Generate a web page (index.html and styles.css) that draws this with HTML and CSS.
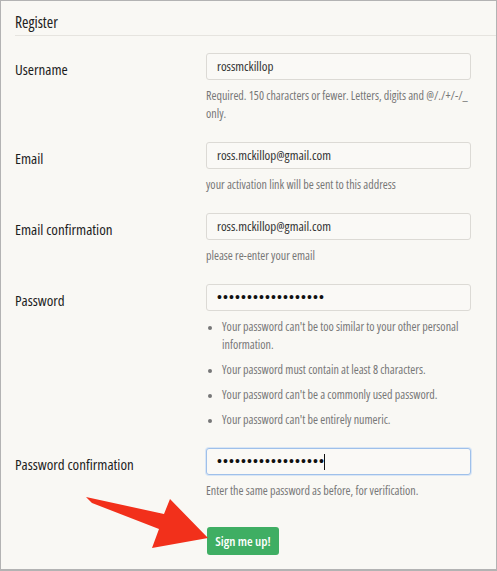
FILE: index.html
```html
<!DOCTYPE html>
<html>
<head>
<meta charset="utf-8">
<link rel="stylesheet" href="styles.css">
</head>
<body>
<div class="panel">
  <div class="header">Register</div>
  <form class="form">
    <div class="row">
      <div class="label">Username</div>
      <div class="field">
        <div class="input">rossmckillop</div>
        <div class="help">Required. 150 characters or fewer. Letters, digits and @/./+/-/_ only.</div>
      </div>
    </div>
    <div class="row">
      <div class="label">Email</div>
      <div class="field">
        <div class="input">ross.mckillop@gmail.com</div>
        <div class="help">your activation link will be sent to this address</div>
      </div>
    </div>
    <div class="row">
      <div class="label">Email confirmation</div>
      <div class="field">
        <div class="input">ross.mckillop@gmail.com</div>
        <div class="help">please re-enter your email</div>
      </div>
    </div>
    <div class="row">
      <div class="label">Password</div>
      <div class="field">
        <div class="input dots">••••••••••••••••••</div>
        <ul class="rules">
          <li>Your password can't be too similar to your other personal information.</li>
          <li>Your password must contain at least 8 characters.</li>
          <li>Your password can't be a commonly used password.</li>
          <li>Your password can't be entirely numeric.</li>
        </ul>
      </div>
    </div>
    <div class="row">
      <div class="label">Password confirmation</div>
      <div class="field">
        <div class="input dots focus">••••••••••••••••••<span class="caret"></span></div>
        <div class="help">Enter the same password as before, for verification.</div>
      </div>
    </div>
    <div class="actions">
      <button type="button" class="btn">Sign me up!</button>
    </div>
  </form>
  <svg class="arrow" width="140" height="70" viewBox="80 490 140 70">
    <polygon points="86,497 164,514 170,499 208,538 152,548 159,529 92,503" fill="#f2301b"/>
  </svg>
</div>
</body>
</html>
```
FILE: styles.css
```css
* { box-sizing: border-box; }
html, body { margin: 0; padding: 0; }
body {
  background: #f9f8f4;
  font-family: "Open Sans", sans-serif;
  font-stretch: 75%;
  color: #222;
}
.panel {
  position: relative;
  width: 497px;
  height: 571px;
  border: 1px solid #b3b3b3;
  border-bottom-width: 2px;
  background: #f9f8f4;
  overflow: hidden;
}
.header {
  margin-left: 14px;
  padding: 12px 0 4px;
  line-height: 18px;
  font-size: 15.5px;
  color: #222;
  border-bottom: 1px solid #e6e4df;
}
.form {
  padding: 17px 0 0 14px;
  display: flex;
  flex-direction: column;
  gap: 19px;
}
.row {
  display: grid;
  grid-template-columns: 191px 265px;
}
.label {
  padding-top: 7px;
  line-height: 18px;
  font-size: 15px;
  color: #1e1e1e;
}
.input {
  height: 27px;
  border: 1px solid #dcdad5;
  border-radius: 3px;
  background: #faf9f6;
  padding: 0 10px;
  font-size: 13px;
  line-height: 25px;
  color: #333;
  display: flex;
  align-items: center;
}
.input.dots {
  font-family: "Liberation Sans", sans-serif;
  font-stretch: normal;
  font-size: 14px;
  letter-spacing: 1.1px;
  color: #111;
}
.input.focus {
  border-color: #9fc0ea;
  box-shadow: 0 0 0 1px #d9e6f5;
}
.caret {
  display: inline-block;
  width: 1px;
  height: 16px;
  background: #111;
  margin-left: -1px;
}
.help {
  margin-top: 7px;
  font-size: 12px;
  line-height: 18px;
  color: #777;
}
.rules {
  margin: 7px 0 0;
  padding: 0 0 0 16px;
  font-size: 12px;
  line-height: 18px;
  color: #777;
}
.rules li { margin-bottom: 7px; }
.rules li:last-child { margin-bottom: 0; }
.rules li::marker { font-size: 10px; }
.actions {
  padding-left: 192px;
  padding-top: 8px;
}
.btn {
  font-family: inherit;
  font-stretch: inherit;
  width: 72px;
  height: 28px;
  border: none;
  border-radius: 3px;
  background: #3fae63;
  color: #fff;
  font-weight: 600;
  font-size: 13px;
  padding: 0;
}
.arrow {
  position: absolute;
  left: 79px;
  top: 489px;
}
```
